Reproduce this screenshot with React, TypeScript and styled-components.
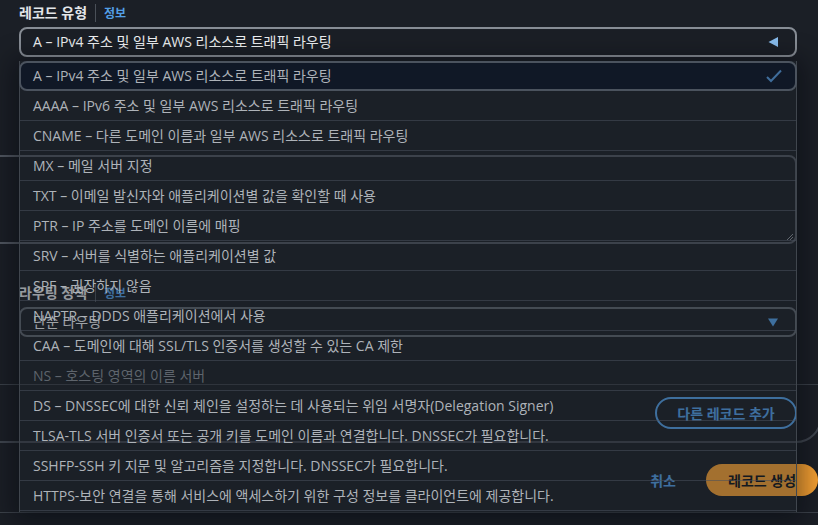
import React from "react";
import styled, { createGlobalStyle } from "styled-components";

const Global = createGlobalStyle`
  html, body { margin: 0; padding: 0; background: #1b1f26; }
  body {
    font-family: "Open Sans", "Noto Sans CJK KR", sans-serif;
    font-size: 14px;
    color: #e9ebed;
  }
  * { box-sizing: border-box; }
`;

const Page = styled.div`
  position: relative;
  width: 818px;
  height: 525px;
  overflow: hidden;
  background: #1b1f26;
`;

const Card = styled.section`
  margin: -20px 0 0 -30px;
  width: 852px;
  height: 463px;
  border: 2px solid #3f454e;
  border-radius: 0 0 26px 26px;
  padding: 21px 23px 0 47px;
  display: flex;
  flex-direction: column;
`;

const LabelRow = styled.div<{ $top?: number }>`
  display: flex;
  align-items: center;
  height: 20px;
  margin-top: ${(p) => p.$top ?? 0}px;
`;

const Label = styled.span`
  font-weight: 700;
  font-size: 14px;
  color: #e3e6e9;
  line-height: 20px;
`;

const Divider = styled.span`
  width: 1px;
  height: 18px;
  background: #4a5058;
  margin: 0 8px 0 8px;
`;

const Info = styled.span`
  font-weight: 700;
  font-size: 12px;
  color: #539fe5;
`;

const SelectBox = styled.div<{ $dim?: boolean }>`
  margin-top: 4px;
  height: 30px;
  border: ${(p) => (p.$dim ? "2px solid #5d646d" : "2px solid #878d95")};
  border-radius: 8px;
  display: flex;
  align-items: center;
  justify-content: space-between;
  padding: 0 16px 0 12px;
  color: #eef0f2;
  line-height: 20px;
`;

const TextArea = styled.div`
  margin: 98px 0 0 -60px;
  height: 89px;
  border: 2px solid #50565f;
  border-radius: 8px;
  position: relative;
`;

const Resize = styled.svg`
  position: absolute;
  right: 1px;
  bottom: 1px;
`;

const CardDivider = styled.div`
  margin: 47px -23px 0 -47px;
  border-top: 1px solid #3a4048;
`;

const CardFooter = styled.div`
  display: flex;
  justify-content: flex-end;
  padding-top: 12px;
`;

const OutlineButton = styled.div`
  height: 32px;
  width: 142px;
  border: 2px solid #539fe5;
  border-radius: 16px;
  color: #539fe5;
  font-weight: 700;
  display: flex;
  align-items: center;
  justify-content: center;
`;

const Actions = styled.div`
  display: flex;
  justify-content: flex-end;
  align-items: center;
  margin-top: 21px;
  height: 32px;
`;

const LinkButton = styled.span`
  color: #539fe5;
  font-weight: 700;
  margin-right: 30px;
`;

const PrimaryButton = styled.div`
  height: 32px;
  width: 112px;
  border-radius: 16px;
  background: #f5a032;
  color: #0f141a;
  font-weight: 700;
  display: flex;
  align-items: center;
  padding-left: 22px;
`;

const BottomLine = styled.div`
  margin-top: 16px;
  border-top: 1px solid #3d434b;
`;

const Dropdown = styled.ul`
  position: absolute;
  left: 19px;
  top: 61px;
  width: 778px;
  height: 451px;
  margin: 0;
  padding: 0;
  list-style: none;
  background: rgba(30, 35, 43, 0.38);
  border-left: 1px solid #40464e;
  border-right: 1px solid #40464e;
  box-shadow: 0 4px 24px 6px rgba(0, 4, 12, 0.45);
`;

const Option = styled.li<{ $selected?: boolean; $disabled?: boolean }>`
  height: 30px;
  display: flex;
  align-items: center;
  justify-content: space-between;
  padding: 0 12px 0 13px;
  color: ${(p) => (p.$disabled ? "#5e646c" : "#aeb3b9")};
  line-height: 20px;
  white-space: nowrap;
  ${(p) =>
    p.$selected
      ? `
    margin: 0 -1px;
    border: 2px solid #4b535e;
    border-radius: 8px;
    background: #101826;
    padding-left: 12px;
  `
      : `
    border-bottom: 1px solid rgba(72, 80, 92, 0.55);
  `}
`;

const options = [
  "AAAA – IPv6 주소 및 일부 AWS 리소스로 트래픽 라우팅",
  "CNAME – 다른 도메인 이름과 일부 AWS 리소스로 트래픽 라우팅",
  "MX – 메일 서버 지정",
  "TXT – 이메일 발신자와 애플리케이션별 값을 확인할 때 사용",
  "PTR – IP 주소를 도메인 이름에 매핑",
  "SRV – 서버를 식별하는 애플리케이션별 값",
  "SPF – 권장하지 않음",
  "NAPTR – DDDS 애플리케이션에서 사용",
  "CAA – 도메인에 대해 SSL/TLS 인증서를 생성할 수 있는 CA 제한",
  "NS – 호스팅 영역의 이름 서버",
  "DS – DNSSEC에 대한 신뢰 체인을 설정하는 데 사용되는 위임 서명자(Delegation Signer)",
  "TLSA-TLS 서버 인증서 또는 공개 키를 도메인 이름과 연결합니다. DNSSEC가 필요합니다.",
  "SSHFP-SSH 키 지문 및 알고리즘을 지정합니다. DNSSEC가 필요합니다.",
  "HTTPS-보안 연결을 통해 서비스에 액세스하기 위한 구성 정보를 클라이언트에 제공합니다.",
];

export default function App() {
  return (
    <>
      <Global />
      <Page>
        <Card>
          <LabelRow>
            <Label>레코드 유형</Label>
            <Divider />
            <Info>정보</Info>
          </LabelRow>
          <SelectBox>
            <span>A – IPv4 주소 및 일부 AWS 리소스로 트래픽 라우팅</span>
            <svg width="12" height="12" viewBox="0 0 12 12">
              <path d="M1.5 6 L11 1 L11 11 Z" fill="#89bdee" />
            </svg>
          </SelectBox>
          <TextArea>
            <Resize width="8" height="8" viewBox="0 0 8 8">
              <path d="M1 7 L7 1 M4 7 L7 4" stroke="#8a9098" strokeWidth="1" />
            </Resize>
          </TextArea>
          <LabelRow $top={39}>
            <Label>라우팅 정책</Label>
            <Divider />
            <Info>정보</Info>
          </LabelRow>
          <SelectBox $dim>
            <span>단순 라우팅</span>
            <svg width="12" height="9" viewBox="0 0 12 9">
              <path d="M1 0.5 L11 0.5 L6 8.5 Z" fill="#539fe5" />
            </svg>
          </SelectBox>
          <CardDivider />
          <CardFooter>
            <OutlineButton>다른 레코드 추가</OutlineButton>
          </CardFooter>
        </Card>
        <Actions>
          <LinkButton>취소</LinkButton>
          <PrimaryButton>레코드 생성</PrimaryButton>
        </Actions>
        <BottomLine />
        <Dropdown>
          <Option $selected>
            <span>A – IPv4 주소 및 일부 AWS 리소스로 트래픽 라우팅</span>
            <svg width="18" height="16" viewBox="0 0 18 16">
              <path d="M2 9 L6 13 L16 2.5" fill="none" stroke="#3f6d9b" strokeWidth="2" />
            </svg>
          </Option>
          {options.map((o) => (
            <Option key={o} $disabled={o.startsWith("NS")}>
              <span>{o}</span>
            </Option>
          ))}
        </Dropdown>
      </Page>
    </>
  );
}
